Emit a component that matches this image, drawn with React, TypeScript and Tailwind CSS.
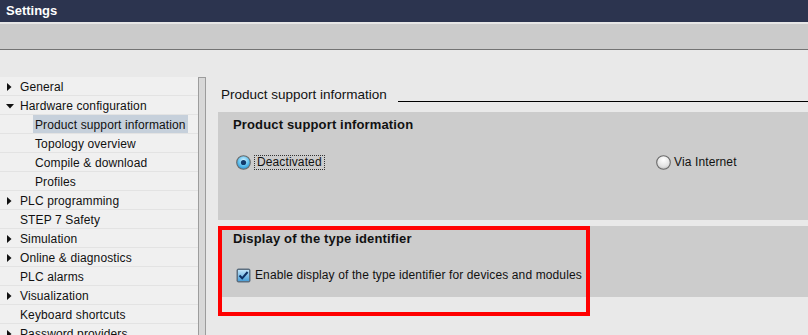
import React from "react";

type NavItem = {
  label: string;
  level: 0 | 1;
  arrow?: "right" | "down";
  selected?: boolean;
};

const navItems: NavItem[] = [
  { label: "General", level: 0, arrow: "right" },
  { label: "Hardware configuration", level: 0, arrow: "down" },
  { label: "Product support information", level: 1, selected: true },
  { label: "Topology overview", level: 1 },
  { label: "Compile & download", level: 1 },
  { label: "Profiles", level: 1 },
  { label: "PLC programming", level: 0, arrow: "right" },
  { label: "STEP 7 Safety", level: 0 },
  { label: "Simulation", level: 0, arrow: "right" },
  { label: "Online & diagnostics", level: 0, arrow: "right" },
  { label: "PLC alarms", level: 0 },
  { label: "Visualization", level: 0, arrow: "right" },
  { label: "Keyboard shortcuts", level: 0 },
  { label: "Password providers", level: 0, arrow: "right" },
];

function Arrow({ dir }: { dir: "right" | "down" }) {
  if (dir === "down") {
    return (
      <svg width="8" height="5" viewBox="0 0 8 5" className="absolute left-[6px] top-[8px]">
        <polygon points="0,0 8,0 4,4.5" fill="#111" />
      </svg>
    );
  }
  return (
    <svg width="5" height="8" viewBox="0 0 5 8" className="absolute left-[7px] top-[6px]">
      <polygon points="0,0 4.5,4 0,8" fill="#111" />
    </svg>
  );
}

function Radio({ checked }: { checked?: boolean }) {
  return (
    <svg width="15" height="15" viewBox="0 0 15 15" className="shrink-0">
      <defs>
        <radialGradient id="rOn" cx="50%" cy="35%" r="65%">
          <stop offset="0%" stopColor="#d8f3ff" />
          <stop offset="60%" stopColor="#5ec0ee" />
          <stop offset="100%" stopColor="#2a8fd0" />
        </radialGradient>
        <radialGradient id="rOff" cx="50%" cy="30%" r="70%">
          <stop offset="0%" stopColor="#ffffff" />
          <stop offset="70%" stopColor="#e2e2e2" />
          <stop offset="100%" stopColor="#bdbdbd" />
        </radialGradient>
      </defs>
      <circle cx="7.5" cy="7.5" r="6.8" fill={checked ? "url(#rOn)" : "url(#rOff)"} stroke="#6a6a6a" strokeWidth="1.1" />
      {checked && <circle cx="7.5" cy="7.5" r="2.6" fill="#123a6c" />}
    </svg>
  );
}

function Checkbox() {
  return (
    <svg width="15" height="15" viewBox="0 0 15 15" className="shrink-0">
      <defs>
        <linearGradient id="cb" x1="0" y1="0" x2="0" y2="1">
          <stop offset="0%" stopColor="#bfe3f8" />
          <stop offset="100%" stopColor="#4a9fd8" />
        </linearGradient>
      </defs>
      <rect x="0.5" y="0.5" width="14" height="14" rx="2" fill="#5c6f80" />
      <rect x="2" y="2" width="11" height="11" fill="url(#cb)" />
      <polyline points="3.5,7.5 6.2,10.3 11.6,4" fill="none" stroke="#0d2f63" strokeWidth="2" />
    </svg>
  );
}

export default function App() {
  return (
    <div className="w-[808px] h-[335px] overflow-hidden flex flex-col bg-[#e9e9e9] font-['Liberation_Sans',Arial,sans-serif] text-[12px] tracking-[0.12px] text-[#111]">
      {/* title bar */}
      <div className="h-[22px] shrink-0 bg-[#2c344f] pl-[6px] text-white font-bold text-[13px] leading-[22px] tracking-normal">
        Settings
      </div>
      <div className="h-[2px] shrink-0 bg-[#e6e6e6]" />
      <div className="h-[26px] shrink-0 bg-[#cbcbcb] border-b border-[#737373]" />

      <div className="flex flex-1 min-h-0">
        {/* sidebar */}
        <div className="w-[198px] shrink-0 pt-[27px]">
          <div className="bg-[#f0f0f0] h-full">
            {navItems.map((item) => (
              <div
                key={item.label}
                className="relative h-[19px] border-b border-[#e3e3e3] leading-[20px] whitespace-nowrap"
              >
                {item.arrow && <Arrow dir={item.arrow} />}
                {item.level === 0 ? (
                  <span className="absolute left-[20px] top-0">{item.label}</span>
                ) : (
                  <span
                    className={`absolute left-[33px] top-0 h-[18px] pl-[2px] ${
                      item.selected ? "w-[155px] bg-[#c6d0db]" : ""
                    }`}
                  >
                    {item.label}
                  </span>
                )}
              </div>
            ))}
          </div>
        </div>

        {/* scrollbar */}
        <div className="w-[8px] shrink-0 pt-[27px]">
          <div className="h-full bg-[#d8d8d8] border border-b-0 border-[#9c9c9c]" />
        </div>

        {/* content */}
        <div className="flex-1 ml-[12px] pt-[37px] flex flex-col">
          <div className="flex items-end pl-[3px]">
            <span className="text-[13.5px] leading-[16px] tracking-normal whitespace-nowrap">Product support information</span>
            <div className="flex-1 ml-[11px] mb-px h-px bg-black" />
          </div>

          <div className="mt-[9px] h-[108px] bg-[#cccccc] pl-[15px] pt-[5px]">
            <div className="font-bold text-[13px] leading-[16px] tracking-[0.15px]">Product support information</div>
            <div className="flex mt-[21px] h-[16px] items-center">
              <div className="w-[423px] flex items-center pl-[3px]">
                <Radio checked />
                <span className="ml-[3px] h-[15px] leading-[13px] px-[2px] border border-dotted border-[#333]">
                  Deactivated
                </span>
              </div>
              <div className="flex items-center">
                <Radio />
                <span className="ml-[3px]">Via Internet</span>
              </div>
            </div>
          </div>

          <div className="relative mt-[6px] h-[71px] bg-[#cccccc] pl-[15px] pt-[5px]">
            <div className="font-bold text-[13px] leading-[16px] tracking-[0.15px]">Display of the type identifier</div>
            <div className="flex mt-[20px] h-[16px] items-center pl-[3px]">
              <Checkbox />
              <span className="ml-[4px]">Enable display of the type identifier for devices and modules</span>
            </div>
            {/* annotation */}
            <div className="absolute left-0 top-0 w-[372px] h-[90px] border-4 border-[#ff0000]" />
          </div>
        </div>
      </div>
    </div>
  );
}
